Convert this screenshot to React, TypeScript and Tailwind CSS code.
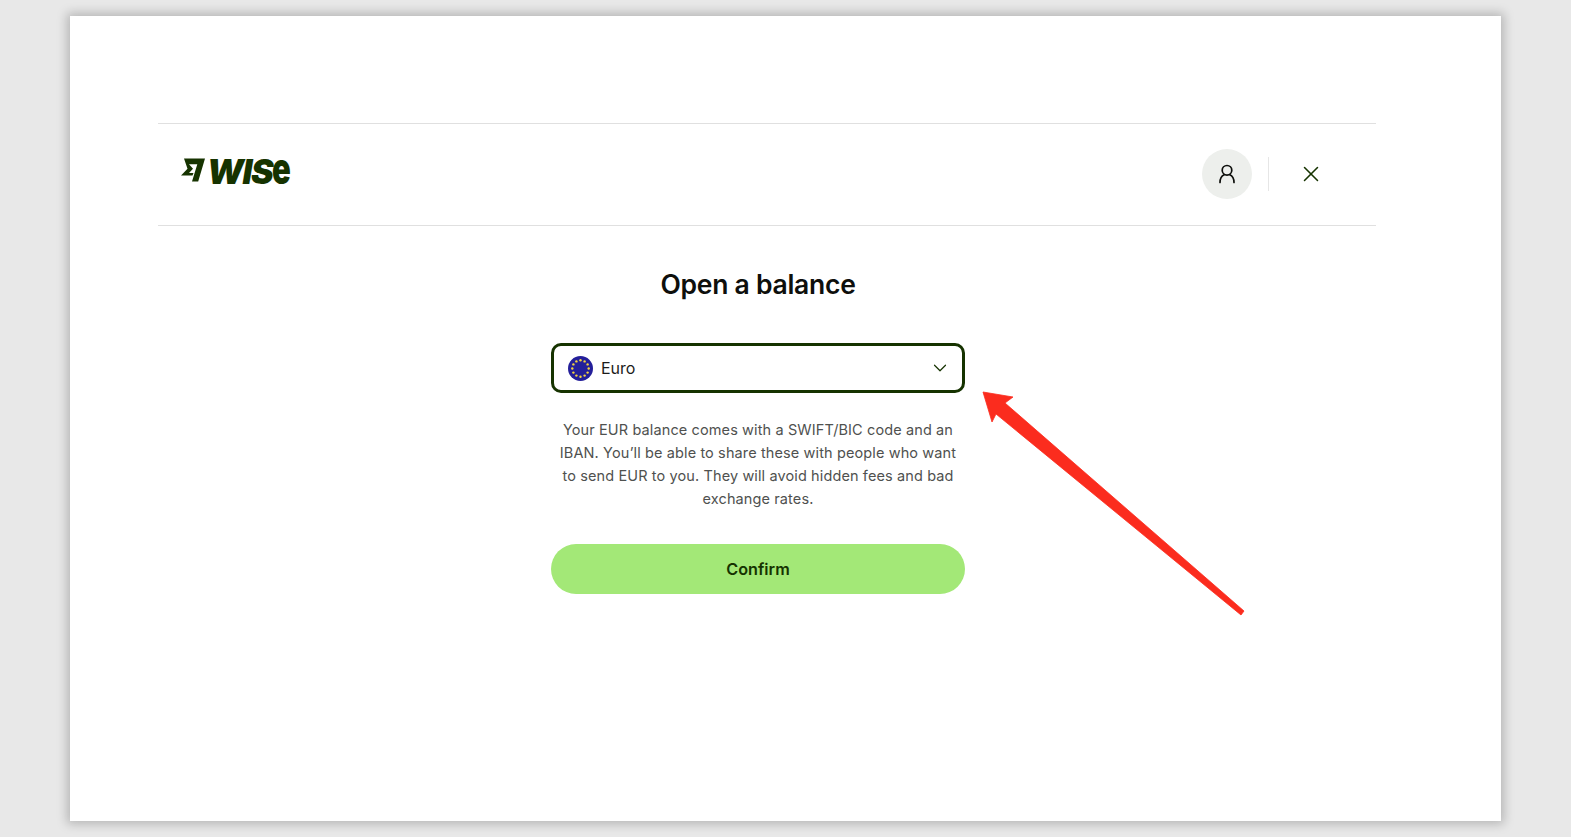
import { ChevronDown, X } from "lucide-react";

function WiseLogo() {
  return (
    <div className="flex items-center text-[#163300] font-['Inter',sans-serif]">
      <svg width="24" height="24" viewBox="0 0 24 24" fill="#163300" className="mr-[2px] mt-[4px]">
        <path d="M3 0.500H24L17.200 23.500H11L16.300 6.300H8L12 10.800L8 15H12.500L11.500 17.500H0L6.500 10.800Z" />
      </svg>
      <div className="flex items-baseline">
        <span className="text-[34px] leading-none font-black italic tracking-[-0.04em]">WIS</span>
        <span className="inline-block w-[18px] origin-left scale-x-[0.72] text-[43px] leading-none font-black">e</span>
      </div>
    </div>
  );
}

function EuFlag() {
  const stars = Array.from({ length: 12 }, (_, i) => {
    const a = (i * Math.PI) / 6;
    return { x: 12.5 + 8.2 * Math.cos(a), y: 12.5 + 8.2 * Math.sin(a) };
  });
  return (
    <svg width="25" height="25" viewBox="0 0 25 25">
      <circle cx="12.500" cy="12.500" r="12.500" fill="#241f9a" />
      {stars.map((s, i) => (
        <circle key={i} cx={s.x} cy={s.y} r="1.2" fill="#f5d33f" />
      ))}
    </svg>
  );
}

export default function App() {
  return (
    <div className="relative h-[837px] w-full overflow-hidden bg-[#e8e8e8] font-['Inter',sans-serif]">
      <div className="ml-[70px] mt-[16px] h-[805px] w-[1431px] bg-white px-[88px] pt-[107px] shadow-[0_0_10px_3px_rgba(0,0,0,0.22)]">
        <header className="flex h-[103px] w-[1218px] items-center justify-between border-y border-[#e0e0e0] pl-[23px] pr-[52px]">
          <div className="-mt-[13px]">
            <WiseLogo />
          </div>
          <div className="-mt-[2px] flex items-center">
            <div className="flex h-[50px] w-[50px] items-center justify-center rounded-full bg-[#edefec]">
              <svg width="24" height="24" viewBox="0 0 24 24" fill="none" stroke="#0e0f0c" strokeWidth="1.7" strokeLinecap="round">
                <circle cx="12" cy="8.300" r="4.800" />
                <path d="M5 20.500c0-3.800 2-6.800 4.200-7.800M19 20.500c0-3.800-2-6.800-4.200-7.800" />
              </svg>
            </div>
            <div className="ml-[16px] h-[34px] w-px bg-[#e6e6e6]" />
            <X size={26} strokeWidth={1.4} className="ml-[29px] text-[#163300]" />
          </div>
        </header>

        <main className="flex w-[1200px] flex-col items-center">
          <h1 className="mt-[41px] text-center text-[26.500px] font-semibold leading-[34px] tracking-[-0.01em] text-[#0e0f0c]">
            Open a balance
          </h1>
          <button className="mt-[42px] flex h-[50px] w-[414px] items-center rounded-[10px] border-[3px] border-[#163300] bg-white pl-[14px] pr-[11px]">
            <EuFlag />
            <span className="ml-[8px] text-[16px] text-[#1c1c1a]">Euro</span>
            <ChevronDown size={22} strokeWidth={1.3} className="ml-auto text-[#163300]" />
          </button>
          <p className="mt-[25px] w-[414px] text-center text-[14.500px] leading-[23px] tracking-[0.008em] text-[#4f514f]">
            Your EUR balance comes with a SWIFT/BIC code and an IBAN. You’ll be able to share these with people who want to send EUR to you. They will avoid hidden fees and bad exchange rates.
          </p>
          <button className="mt-[34px] flex h-[50px] w-[414px] items-center justify-center rounded-full bg-[#a3e877] text-[16.200px] font-semibold text-[#163300]">
            Confirm
          </button>
        </main>
      </div>

      <svg className="absolute left-0 top-0" width="1571" height="837" viewBox="0 0 1571 837">
        <path
          d="M983 392L1013 397L1005 403L1244 611L1241 615L996 414L992 422Z"
          fill="#fb2c1e"
          stroke="#fb2c1e"
          strokeWidth="0.8"
          strokeLinejoin="round"
        />
      </svg>
    </div>
  );
}
